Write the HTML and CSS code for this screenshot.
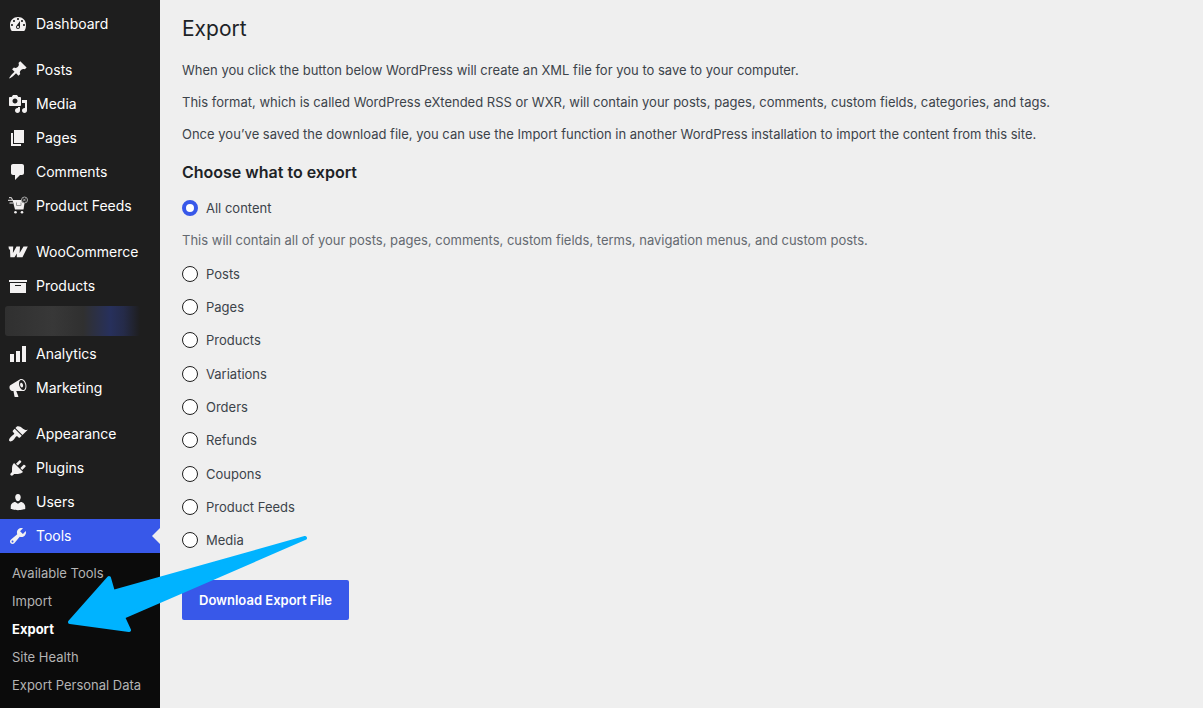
FILE: index.html
```html
<!DOCTYPE html>
<html lang="en">
<head>
    <meta charset="UTF-8">
    <meta name="viewport" content="width=device-width, initial-scale=1.0">
    <title>Export</title>
    <link rel="stylesheet" href="styles.css">
</head>
<body>
    <div class="admin">
        <nav class="sidebar" aria-label="Main menu">
            <ul class="menu">
                <li><a href="#" class="menu-link">
                    <svg class="icon" viewBox="0 0 20 20"><path fill-rule="evenodd" d="M3.76 17h12.48c1.34-1.63 1.76-3.71 1.76-6 0-5-3.58-8-8-8s-8 3-8 8c0 2.29.42 4.37 1.76 6zM10 4c.55 0 1 .45 1 1s-.45 1-1 1-1-.45-1-1 .45-1 1-1zM6 6c.55 0 1 .45 1 1s-.45 1-1 1-1-.45-1-1 .45-1 1-1zm8 0c.55 0 1 .45 1 1s-.45 1-1 1-1-.45-1-1 .45-1 1-1zm-5.37 5.55L12 7v6c0 1.1-.9 2-2 2s-2-.9-2-2c0-.57.24-1.08.63-1.45zM4 10c.55 0 1 .45 1 1s-.45 1-1 1-1-.45-1-1 .45-1 1-1zm12 0c.55 0 1 .45 1 1s-.45 1-1 1-1-.45-1-1 .45-1 1-1zm-5 3c0-.55-.45-1-1-1s-1 .45-1 1 .45 1 1 1 1-.45 1-1z"/></svg>
                    Dashboard</a></li>
                <li class="separated"><a href="#" class="menu-link">
                    <svg class="icon" viewBox="0 0 20 20"><path d="M10.44 3.02l1.82-1.82 6.36 6.35-1.83 1.82c-1.05-.68-2.48-.57-3.41.36l-.75.75c-.92.93-1.04 2.35-.35 3.41l-1.83 1.82-2.41-2.41-2.8 2.79c-.42.42-3.38 2.71-3.8 2.29s1.86-3.39 2.28-3.81l2.79-2.79L4.1 9.36l1.83-1.82c1.05.69 2.48.57 3.4-.36l.75-.75c.93-.92 1.05-2.35.36-3.41z"/></svg>
                    Posts</a></li>
                <li><a href="#" class="menu-link">
                    <svg class="icon" viewBox="0 0 20 20"><path fill-rule="evenodd" d="M13 11V4c0-.55-.45-1-1-1h-1.67L9 1H5L3.67 3H2c-.55 0-1 .45-1 1v7c0 .55.45 1 1 1h10c.55 0 1-.45 1-1zM7 4.5c1.38 0 2.5 1.12 2.5 2.5S8.38 9.5 7 9.5 4.5 8.38 4.5 7 5.62 4.5 7 4.5zM14 6h5v10.5c0 1.38-1.12 2.5-2.5 2.5S14 17.88 14 16.5s1.12-2.5 2.5-2.5c.17 0 .34.02.5.05V9h-3V6zm-4 8.05V13h2v3.5c0 1.38-1.12 2.5-2.5 2.5S7 17.88 7 16.5 8.12 14 9.5 14c.17 0 .34.02.5.05z"/></svg>
                    Media</a></li>
                <li><a href="#" class="menu-link">
                    <svg class="icon" viewBox="0 0 20 20"><path d="M6 15V2h10v13H6zm-1 1h8v2H3V5h2v11z"/></svg>
                    Pages</a></li>
                <li><a href="#" class="menu-link">
                    <svg class="icon" viewBox="0 0 20 20"><path d="M5 2h9c1.1 0 2 .9 2 2v7c0 1.1-.9 2-2 2h-2l-5 5v-5H5c-1.1 0-2-.9-2-2V4c0-1.1.9-2 2-2z"/></svg>
                    Comments</a></li>
                <li><a href="#" class="menu-link">
                    <svg class="icon" viewBox="0 0 20 20">
                        <path d="M4.500 4H17l-1.500 9.500H7z"/>
                        <path class="line" d="M1 1.700h2.500l1.200 3M0 4.300h4.500M1.500 7h3.500"/>
                        <path class="line dark" d="M8.500 6.500v3h4.500v-3"/>
                        <circle class="line badge" cx="16.500" cy="4" r="3"/>
                        <path class="line thin" d="M15.200 5l2.500-2.200M15.300 3l2.300 2"/>
                        <circle cx="7.500" cy="16.200" r="1.300"/><circle cx="14" cy="16.200" r="1.300"/>
                    </svg>
                    Product Feeds</a></li>
                <li class="separated"><a href="#" class="menu-link">
                    <svg class="icon" viewBox="0 0 20 20"><path d="M.5 4.500H5.200L4.900 11 8.500 4.500H12L11.600 11 15.500 4.500H19.800L14.500 15.200H8.800L8.900 11.500 6.500 15.200H2.300L2 7.500H1z"/></svg>
                    WooCommerce</a></li>
                <li><a href="#" class="menu-link">
                    <svg class="icon" viewBox="0 0 20 20"><path fill-rule="evenodd" d="M19 4v2H1V4h18zM2 7h16v10H2V7zm11 3V9H7v1h6z"/></svg>
                    Products</a></li>
                <li class="menu-hidden"></li>
                <li><a href="#" class="menu-link">
                    <svg class="icon" viewBox="0 0 20 20"><path d="M18 18V2h-4v16h4zm-6 0V7H8v11h4zm-6 0v-8H2v8h4z"/></svg>
                    Analytics</a></li>
                <li><a href="#" class="menu-link">
                    <svg class="icon" viewBox="0 0 20 20"><path fill-rule="evenodd" d="M18.150 5.940c.46 1.620.38 3.220-.02 4.480-.42 1.280-1.260 2.180-2.300 2.480-.16.06-.26.06-.4.06-.06.02-.12.02-.18.02-.06.02-.14.02-.22.02h-6.800l2.220 5.500c.02.14-.06.26-.14.34-.08.1-.24.16-.34.16H6.950c-.1 0-.26-.06-.34-.16-.08-.08-.16-.2-.14-.34l-1-5.500H4.250l-.02-.02c-.5.06-1.080-.18-1.540-.62s-.88-1.080-1.060-1.880c-.24-.8-.2-1.560-.02-2.200.18-.62.58-1.080 1.060-1.300l.02-.02 9-5.400c.1-.06.18-.1.24-.16.06-.04.14-.08.24-.12.16-.08.28-.12.5-.18 1.040-.3 2.240.1 3.220.98s1.840 2.240 2.260 3.860zm-2.580 5.980h-.02c.4-.1.74-.34 1.040-.7.58-.7.86-1.760.86-3.040 0-.64-.1-1.300-.28-1.980-.34-1.360-1.020-2.500-1.780-3.240s-1.680-1.100-2.460-.88c-.82.22-1.400.96-1.700 2-.32 1.040-.28 2.360.06 3.720.38 1.360 1 2.500 1.800 3.240.78.74 1.620 1.100 2.480.88zm-2.540-7.080c.22-.04.42-.02.62.04.38.16.76.48 1.020 1s.42 1.200.42 1.780c0 .3-.04.56-.12.8-.18.48-.44.84-.86.94-.34.1-.8-.06-1.140-.4s-.64-.86-.78-1.500c-.18-.62-.12-1.240.02-1.720s.48-.84.82-.94z"/></svg>
                    Marketing</a></li>
                <li class="separated"><a href="#" class="menu-link">
                    <svg class="icon" viewBox="0 0 20 20"><path d="M14.480 11.060L7.410 3.990l1.500-1.500c.5-.56 2.300-.47 3.510.32 1.210.8 1.430 1.280 2.910 2.100 1.180.64 2.450 1.260 4.450.85zm-.71.71L6.700 4.700 4.930 6.470c-.39.39-.39 1.020 0 1.410l1.060 1.060c.39.39.39 1.030 0 1.420-.6.6-1.430 1.110-2.210 1.690-.35.26-.7.53-1.010.84C1.430 14.230.4 16.080 1.400 17.070c.99 1 2.840-.03 4.180-1.360.31-.31.58-.66.85-1.020.57-.78 1.080-1.610 1.690-2.210.39-.39 1.020-.39 1.410 0l1.060 1.060c.39.39 1.020.39 1.410 0z"/></svg>
                    Appearance</a></li>
                <li><a href="#" class="menu-link">
                    <svg class="icon" viewBox="0 0 20 20"><path d="M13.110 4.360L9.870 7.600 8 5.730l3.240-3.240c.35-.34 1.050-.2 1.560.32.52.51.66 1.210.31 1.550zm-8 1.770l.91-1.120 9.010 9.010-1.190.84c-.71.71-2.630 1.160-3.820 1.160H6.140L4.900 17.260c-.59.59-1.540.59-2.120 0-.59-.58-.59-1.530 0-2.120l1.240-1.240v-3.880c0-1.130.4-3.190 1.090-3.890zm7.260 3.970l3.240-3.240c.34-.35 1.040-.21 1.550.31.52.51.66 1.210.31 1.550l-3.240 3.250z"/></svg>
                    Plugins</a></li>
                <li><a href="#" class="menu-link">
                    <svg class="icon" viewBox="0 0 20 20"><path d="M10 9.250c-2.270 0-2.730-3.440-2.730-3.440C7 4.020 7.820 2 9.970 2c2.160 0 2.980 2.020 2.710 3.810 0 0-.41 3.440-2.680 3.440zm0 2.570L12.720 10c2.390 0 4.520 2.330 4.520 4.530v2.490s-3.650 1.130-7.240 1.130c-3.650 0-7.240-1.130-7.240-1.130v-2.490c0-2.250 1.940-4.480 4.470-4.480z"/></svg>
                    Users</a></li>
                <li><a href="#" class="menu-link current">
                    <svg class="icon" viewBox="0 0 20 20"><path fill-rule="evenodd" d="M16.680 9.770c-1.340 1.340-3.300 1.670-4.950.99l-5.410 6.520c-.99.99-2.590.99-3.580 0s-.99-2.590 0-3.570l6.520-5.420c-.68-1.650-.35-3.610.99-4.950 1.280-1.280 3.120-1.620 4.720-1.060l-2.890 2.890 2.820 2.820 2.860-2.870c.53 1.580.18 3.390-1.080 4.650zM3.810 16.210c.4.39 1.040.39 1.430 0 .4-.4.4-1.040 0-1.430-.39-.4-1.030-.4-1.430 0-.39.39-.39 1.030 0 1.430z"/></svg>
                    Tools</a></li>
            </ul>
            <ul class="submenu">
                <li><a href="#">Available Tools</a></li>
                <li><a href="#">Import</a></li>
                <li><a href="#" class="active">Export</a></li>
                <li><a href="#">Site Health</a></li>
                <li><a href="#">Export Personal Data</a></li>
            </ul>
        </nav>

        <main class="content">
            <h1>Export</h1>
            <p>When you click the button below WordPress will create an XML file for you to save to your computer.</p>
            <p>This format, which is called WordPress eXtended RSS or WXR, will contain your posts, pages, comments, custom fields, categories, and tags.</p>
            <p>Once you’ve saved the download file, you can use the Import function in another WordPress installation to import the content from this site.</p>

            <h2 id="export-heading">Choose what to export</h2>
            <form>
                <div role="radiogroup" aria-labelledby="export-heading">
                    <label class="option"><input type="radio" name="content" value="all" aria-describedby="all-description" checked> All content</label>
                    <p class="description" id="all-description">This will contain all of your posts, pages, comments, custom fields, terms, navigation menus, and custom posts.</p>
                    <div class="options">
                        <label class="option"><input type="radio" name="content" value="posts"> Posts</label>
                        <label class="option"><input type="radio" name="content" value="pages"> Pages</label>
                        <label class="option"><input type="radio" name="content" value="product"> Products</label>
                        <label class="option"><input type="radio" name="content" value="variation"> Variations</label>
                        <label class="option"><input type="radio" name="content" value="order"> Orders</label>
                        <label class="option"><input type="radio" name="content" value="refund"> Refunds</label>
                        <label class="option"><input type="radio" name="content" value="coupon"> Coupons</label>
                        <label class="option"><input type="radio" name="content" value="feed"> Product Feeds</label>
                        <label class="option"><input type="radio" name="content" value="media"> Media</label>
                    </div>
                </div>
                <button type="submit">Download Export File</button>
            </form>
        </main>

        <svg class="arrow" viewBox="0 0 244 102" aria-hidden="true">
            <path d="M3 89L42 45L46 59L238 5L56 84L62 97z"/>
        </svg>
    </div>
</body>
</html>
```

FILE: styles.css
```css
body {
    font-family: Inter, "Liberation Sans", sans-serif;
    font-size: 13px;
    line-height: 20px;
    background-color: #efefef;
    color: #3c434a;
    margin: 0;
}

.admin {
    position: relative;
    display: flex;
    min-height: 100vh;
}

/* Sidebar */
.sidebar {
    display: flex;
    flex-direction: column;
    flex: 0 0 160px;
    background-color: #1e1e1e;
}

.menu,
.submenu {
    list-style: none;
    margin: 0;
    padding: 0;
}

.menu {
    padding-top: 7px;
}

.menu-link {
    display: flex;
    align-items: center;
    gap: 8px;
    height: 34px;
    padding-left: 8px;
    font-size: 14px;
    color: #fff;
    text-decoration: none;
}

.separated {
    margin-top: 12px;
}

.menu-link.current {
    position: relative;
    background-color: #3858e9;
}

.menu-link.current::after {
    content: "";
    position: absolute;
    right: 0;
    top: 9px;
    border: 8px solid transparent;
    border-left: 0;
    border-right-color: #efefef;
}

.menu-hidden {
    height: 30px;
    margin: 3px 20px 1px 5px;
    border-radius: 3px;
    background: linear-gradient(to right, #303030, #383838 35%, #303030 58%, #27305c 78%, #252b49 88%, #1e1e1e);
}

.icon {
    flex: none;
    width: 20px;
    height: 20px;
    fill: #f3f1f1;
    overflow: visible;
}

.icon .line {
    fill: none;
    stroke: #f3f1f1;
    stroke-width: 1;
}

.icon .dark {
    stroke: #999;
}

.icon .badge {
    fill: #1e1e1e;
    stroke: #aaa;
}

.icon .thin {
    stroke: #aaa;
}

.submenu {
    flex: 1;
    padding: 6px 0;
    background-color: #0b0b0b;
}

.submenu a {
    display: block;
    padding: 4px 12px;
    color: #b4b4b4;
    text-decoration: none;
    white-space: nowrap;
}

.submenu .active {
    color: #fff;
    font-weight: 700;
}

/* Export page */
.content {
    flex: 1;
    padding: 14px 20px 20px 22px;
}

h1 {
    margin: 0 0 16px;
    font-size: 21px;
    font-weight: 400;
    line-height: 30px;
    color: #1d2327;
}

p {
    margin: 0 0 12px;
}

h2 {
    margin: 0 0 16px;
    padding-top: 6px;
    font-size: 16px;
    font-weight: 600;
    line-height: 20px;
    color: #1d2327;
}

.option {
    display: flex;
    align-items: center;
    gap: 8px;
}

.option input {
    appearance: none;
    box-sizing: border-box;
    width: 16px;
    height: 16px;
    margin: 0;
    border: 1px solid #1e1e1e;
    border-radius: 50%;
    background-color: #fff;
}

.option input:checked {
    border: 4px solid #3858e9;
}

.description {
    margin: 12px 0 7px;
    color: #646970;
}

.options {
    display: grid;
    grid-auto-rows: 1fr;
    min-height: 300px;
}

button {
    margin-top: 23px;
    padding: 10px 17px;
    border: none;
    border-radius: 2px;
    background-color: #3858e9;
    color: #fff;
    font-family: inherit;
    font-size: 13px;
    font-weight: 600;
    line-height: 20px;
    cursor: pointer;
}

/* Pointer to the Export item */
.arrow {
    position: absolute;
    left: 67px;
    top: 533px;
    width: 244px;
    height: 102px;
    fill: #00b3ff;
    stroke: #00b3ff;
    stroke-width: 4;
    stroke-linejoin: round;
    pointer-events: none;
}
```
